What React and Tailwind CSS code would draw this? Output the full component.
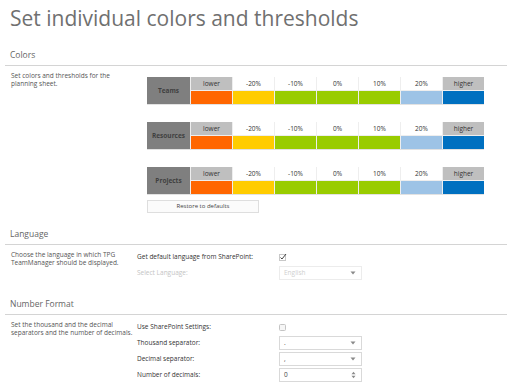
import React from "react";

const font = "font-['Open_Sans','Noto_Sans',sans-serif]";

const headers = ["lower", "-20%", "-10%", "0%", "10%", "20%", "higher"];
const swatches = ["bg-[#ff6600]", "bg-[#ffcc00]", "bg-[#99cc00]", "bg-[#99cc00]", "bg-[#99cc00]", "bg-[#9dc3e6]", "bg-[#0070c0]"];

function SectionHeader({ title }) {
  return (
    <div className="h-[26px] pt-[9px] pl-[5px] border-b border-[#d4d4d4] text-[8.5px] leading-[12px] text-[#666]">
      {title}
    </div>
  );
}

function ThresholdTable({ name }) {
  return (
    <div className="flex gap-[1px] bg-[#eeeeee] w-fit border-b border-[#e2e2e2]">
      <div className="w-[43px] h-[27px] bg-[#7f7f7f] flex items-center justify-center text-[6.5px] font-bold text-[#3f3f3f]">
        {name}
      </div>
      <div className="grid grid-cols-[repeat(7,41px)] grid-rows-[13px_13px] gap-[1px]">
        {headers.map((h, i) => (
          <div
            key={h}
            className={
              "flex items-center justify-center text-[6.5px] text-[#333] " +
              (i === 0 || i === 6 ? "bg-[#bfbfbf]" : "bg-white")
            }
          >
            {h}
          </div>
        ))}
        {swatches.map((c, i) => (
          <div key={i} className={c} />
        ))}
      </div>
    </div>
  );
}

function Caret() {
  return (
    <svg width="6" height="4" viewBox="0 0 6 4" className="shrink-0">
      <path d="M0.5 0.5 L5.5 0.5 L3 3.5 Z" fill="#8a8a8a" />
    </svg>
  );
}

function Select({ value, disabled }) {
  return (
    <div
      className={
        "w-[83px] h-[14px] bg-white flex items-center justify-between pl-[4px] pr-[5px] text-[6.5px] border " +
        (disabled ? "border-[#ececec] text-[#cfcfcf]" : "border-[#d9d9d9] text-[#444]")
      }
    >
      <span>{value}</span>
      <Caret />
    </div>
  );
}

function Row({ label, dim, children }) {
  return (
    <div className="flex items-center h-[14px]">
      <div className={"w-[142px] text-[6.5px] " + (dim ? "text-[#c4c4c4]" : "text-[#333]")}>{label}</div>
      {children}
    </div>
  );
}

export default function App() {
  return (
    <div className={"w-[512px] h-[384px] bg-white overflow-hidden px-[5px] " + font}>
      <h1 className="h-[40px] pt-[5px] pl-[5px] text-[21px] leading-[26px] text-[#707070]">
        Set individual colors and thresholds
      </h1>

      <SectionHeader title="Colors" />
      <div className="grid grid-cols-[132px_1fr] pb-[6px]">
        <p className="pt-[6px] pl-[6px] pr-[8px] text-[6.5px] leading-[8px] text-[#555]">
          Set colors and thresholds for the planning sheet.
        </p>
        <div className="pt-[11px] pl-[10px] flex flex-col">
          <ThresholdTable name="Teams" />
          <div className="h-[17px]" />
          <ThresholdTable name="Resources" />
          <div className="h-[17px]" />
          <ThresholdTable name="Projects" />
          <button className="mt-[5px] w-[112px] h-[13px] border border-[#dedede] bg-[#fbfbfb] text-[6px] text-[#444] flex items-center justify-center">
            Restore to defaults
          </button>
        </div>
      </div>

      <SectionHeader title="Language" />
      <div className="grid grid-cols-[132px_1fr] pb-[9px]">
        <p className="pt-[6px] pl-[6px] pr-[8px] text-[6.5px] leading-[8px] text-[#555]">
          Choose the language in which TPG TeamManager should be displayed.
        </p>
        <div className="pt-[5px] flex flex-col gap-[2px]">
          <Row label="Get default language from SharePoint:">
            <svg width="8" height="8" viewBox="0 0 8 8">
              <rect x="0.5" y="1.5" width="6" height="6" fill="white" stroke="#c8c8c8" />
              <path d="M1.5 4.5 L3 6 L7 1" fill="none" stroke="#444" strokeWidth="1" />
            </svg>
          </Row>
          <Row label="Select Language:" dim>
            <Select value="English" disabled />
          </Row>
        </div>
      </div>

      <SectionHeader title="Number Format" />
      <div className="grid grid-cols-[132px_1fr]">
        <p className="pt-[6px] pl-[6px] pr-[1px] text-[6.5px] leading-[7.5px] text-[#555]">
          Set the thousand and the decimal separators and the number of decimals.
        </p>
        <div className="pt-[5px] flex flex-col gap-[2px]">
          <Row label="Use SharePoint Settings:">
            <div className="w-[7px] h-[7px] rounded-[1.5px] border border-[#c4c4c4] bg-[#f6f6f6]" />
          </Row>
          <Row label="Thousand separator:">
            <Select value="." />
          </Row>
          <Row label="Decimal separator:">
            <Select value="," />
          </Row>
          <Row label="Number of decimals:">
            <div className="w-[83px] h-[14px] bg-white flex items-center justify-between pl-[4px] pr-[5px] text-[6.5px] text-[#444] border border-[#d9d9d9]">
              <span>0</span>
              <svg width="5" height="8" viewBox="0 0 5 8">
                <path d="M0.5 3.2 L4.5 3.2 L2.5 0.8 Z" fill="#8a8a8a" />
                <path d="M0.5 4.8 L4.5 4.8 L2.5 7.2 Z" fill="#8a8a8a" />
              </svg>
            </div>
          </Row>
        </div>
      </div>
    </div>
  );
}
